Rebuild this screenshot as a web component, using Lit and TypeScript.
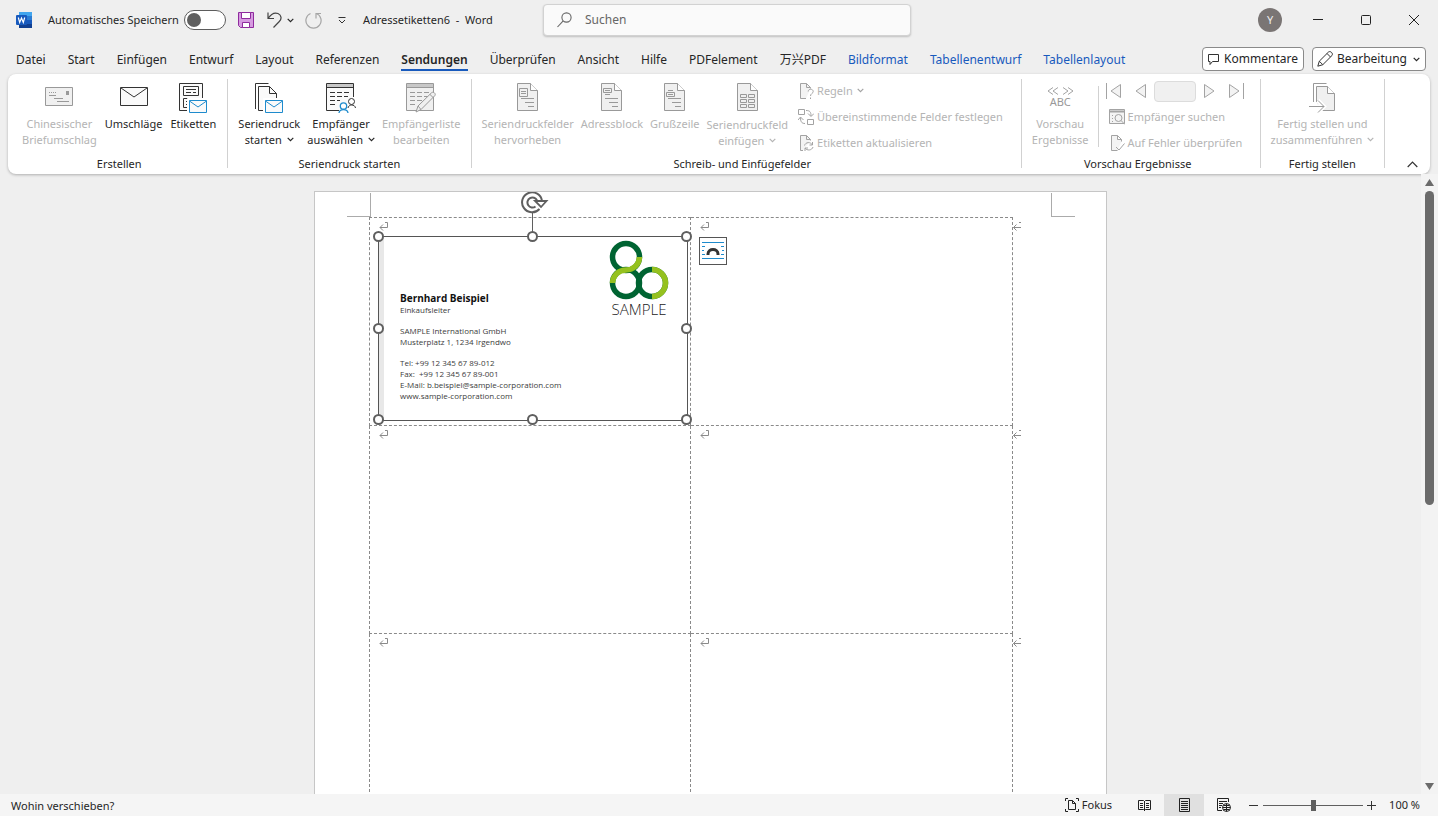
import { LitElement, html, svg, css, nothing } from "lit";
import { customElement } from "lit/decorators.js";

const chevron = html`<svg class="chev" width="7" height="5" viewBox="0 0 7 5"><path d="M.7.8 3.5 3.6 6.3.8" fill="none" stroke="currentColor" stroke-width="1.2"/></svg>`;

const icon = (w: number, h: number, body: unknown) =>
  html`<svg width=${w} height=${h} viewBox="0 0 ${w} ${h}" fill="none" stroke="currentColor" aria-hidden="true">${body}</svg>`;

const sheet = svg`<path d="M.5.5h13l7 7v20H.5z" fill="#f0f0f0"/><path d="M13.5.5v7h7" fill="#fff"/>`;
const miniMail = svg`<path d="M8.500 15.500h21v15h-21z" fill="#fff" stroke="#fff"/><path d="M10.500 17.500h17v12h-17z" fill="#fafafa" stroke="#1e8bcd"/><path d="m10.500 18 8.500 6 8.500-6" stroke="#1e8bcd"/>`;
const halfSheet = svg`<path d="M8.500 15.500h-6V.5h6l4 4v2M8.500.5v4h4" fill="#f3f3f3"/>`;

const icons: Record<string, unknown> = {
  china: icon(28, 30, svg`<path d="M.5 4.500h27v18H.5z" fill="#f0f0f0"/><path d="M4 9.500h8" stroke-dasharray="1 1"/><path d="M4 12.500h7M9 15.500h9M12 18.500h12"/><path d="M21 8h3v4h-3z" fill="#999" stroke="none"/>`),
  envelope: icon(28, 30, svg`<path d="M.5 4.500h27v18H.5z" fill="#fafafa"/><path d="m1 5 13 9L27 5"/>`),
  labels: icon(28, 30, svg`<path d="M9 27.500H.5V.5h23V16" fill="#fafafa"/><path d="M4.500 3.500h15v9h-15zM7 6.500h10M7 9.500h5M14 9.500h3M9 24.500H4.500v-9h15M7 18.500h3M7 21.500h2"/>${miniMail}`),
  merge: icon(28, 30, svg`<path d="M.5 26V.5h13"/><path d="M9 27.500H3.500v-24h11l7 7V16" fill="#fafafa"/><path d="M14.500 3.500v7h7"/>${miniMail}`),
  people: icon(30, 30, svg`<path d="M13 27.500H.5V.5h27V14" fill="#fafafa"/><path d="M1 1h26v3.500H1z" fill="#c8c8c8" stroke="none"/><path d="M1 4.500h26M4 9.500h5M11 9.500h5M18 9.500h5M4 13.500h5M11 13.500h5M18 13.500h4M4 17.500h5M11 17.500h3M4 21.500h5"/><circle cx="25.500" cy="18.500" r="3"/><path d="M22 25c.5-4 7-4 7.500 0"/><g stroke="#1e8bcd" stroke-width="1.300"><circle cx="17.500" cy="23" r="3.200" fill="#fff"/><path d="M13 30c.5-4.500 8.500-4.500 9 0"/></g>`),
  editlist: icon(30, 30, svg`<path d="M.5.5h27v27H.5z" fill="#f0f0f0"/><path d="M1 1h26v3.500H1z" fill="#c8c8c8" stroke="none"/><path d="M1 4.500h26M4 9.500h5M11 9.500h5M18 9.500h5M4 13.500h5M11 13.500h5M18 13.500h4M4 17.500h5M11 17.500h5M4 21.500h5"/><path d="m10 29 2-6L25.500 9.800c2-1.800 5 1.200 3.200 3L15 26.500zM12 23l3 3.500M24 11.500l3.300 3.200" fill="#f0f0f0"/>`),
  fields: icon(21, 30, svg`${sheet}<path d="M2.500 5.500h8v8h-8zM4 8.500h5M4 10.500h5M4 15.500h13M8 19.500h9M11 23.500h6"/>`),
  address: icon(21, 30, svg`${sheet}<path d="M2.500 5.500h8v4h-8zM4 7.500h5M4 11.500h5M4 15.500h13M8 19.500h9M11 23.500h6"/>`),
  greet: icon(21, 30, svg`${sheet}<path d="M2.500 9.500h8v4h-8zM4 7.500h5M4 11.500h5M4 15.500h13M8 19.500h9M11 23.500h6"/>`),
  insert: icon(21, 30, svg`${sheet}<path d="M3.500 11.500h6v3h-6zM11.500 11.500h6v3h-6zM3.500 16.500h6v3h-6zM11.500 16.500h6v3h-6zM3.500 21.500h6v3h-6zM11.500 21.500h6v3h-6z"/>`),
  finish: icon(28, 30, svg`<path d="M5.500 19V.5h13"/><path d="M11.500 27.500h15v-17l-7-7h-11V19" fill="#f0f0f0"/><path d="M19.500 3.500v7h7" fill="#fff"/><path d="M1 23.500h15M10 17.500l6 6-6 6" stroke="#fff" stroke-width="4"/><path d="M1 23.500h15M10 17.500l6 6-6 6"/>`),
  rules: icon(16, 16, svg`<path d="M8 15.500H2.500V.5h6l4 4v1" fill="#f3f3f3"/><path d="M8.500.5v4h4"/><path d="M10.200 8.500c0-3 5-3 5 0 0 2-2.700 2-2.700 4.500M12.500 14.500v1.500"/>`),
  match: icon(16, 16, svg`<path d="M.5.5h6v5h-6zM9.500 10.500h6v5h-6z"/><path d="M8 1.500c4 0 5 1.500 5 5.500M10 4.500l3 3 3-3M7 14.500c-3.500 0-4.500-2-4.500-6M0 11l2.500-3L5.500 11"/>`),
  update: icon(16, 16, svg`<path d="M5 15.500H2.500V.5h6l4 4v1" fill="#f3f3f3"/><path d="M8.500.5v4h4"/><path d="M6.500 10.500c1-3.500 6-4 8-.5M14.500 7v3h-3M15 12c-1 3.500-6 4-8 1M7 16v-3h3"/>`),
  find: icon(16, 16, svg`<path d="M.5.5h15v14H.5z" fill="#f3f3f3"/><path d="M1 2.500h14" stroke-width="2"/><path d="M3 6.500h1M3 9.500h1M3 12.500h1"/><circle cx="9.500" cy="9" r="3.500"/><path d="m12 11.500 4 4"/>`),
  check: icon(16, 16, svg`${halfSheet}<path d="M7 12l3 3 5.500-6.500"/>`),
};

const ret = html`<svg class="ret" width="10" height="9" viewBox="0 0 10 9" fill="none" stroke="#8a8a8a"><path d="M6 .5h2.500v5H1M4 2.500l-3 3 3 3"/></svg>`;
const rowEnd = html`<svg class="rowend" width="10" height="9" viewBox="0 0 10 9" fill="none" stroke="#8a8a8a"><path d="M1.500 5.500H9M4.500 2.500l-3 3 3 3M7 .5h2"/></svg>`;

interface Cmd { i: string; a: string; b?: string; off?: boolean; menu?: boolean; low?: boolean }

@customElement("ribbon-button")
export class RibbonButton extends LitElement {
  static properties = { cmd: { attribute: false } };
  declare cmd: Cmd;
  static styles = css`
    :host { display: block; }
    button { all: unset; box-sizing: border-box; display: flex; flex-direction: column; align-items: center; font: 11px/16px "Noto Sans", sans-serif; color: #262626; white-space: nowrap; text-align: center; }
    button:disabled { color: #b4b4b4; }
    button:disabled svg { color: #999; }
    svg { display: block; color: #333; margin-bottom: 3px; }
    .chev { display: inline-block; margin: 0 0 2px 5px; color: inherit; }
    button:disabled .chev { color: inherit; }
    .low { line-height: 17px; }
  `;
  render() {
    const c = this.cmd;
    return html`<button ?disabled=${c.off}>
      ${icons[c.i]}
      <span class=${c.low ? "low" : ""}>${c.a}</span>
      ${c.b ? html`<span>${c.b}${c.menu ? chevron : nothing}</span>` : nothing}
    </button>`;
  }
}

@customElement("app-root")
export class AppRoot extends LitElement {
  static styles = css`
    :host { display: flex; flex-direction: column; height: 100vh; overflow: hidden; background: #efefef; color: #262626; font: 11px/16px "Noto Sans", "Noto Sans CJK SC", sans-serif; }
    * { box-sizing: border-box; }
    button { font: inherit; color: inherit; background: none; border: 0; padding: 0; }
    svg { display: block; flex: none; }
    .chev { display: inline-block; }

    .titlebar { display: grid; grid-template-columns: 1fr 368px 1fr; align-items: center; height: 40px; flex: none; padding-left: 16px; }
    .quick { display: flex; align-items: center; white-space: nowrap; }
    .auto { display: flex; align-items: center; gap: 5px; margin: 0 12px 0 16px; }
    .switch { appearance: none; margin: 0; width: 42px; height: 20px; border: 1px solid #5c5c5c; border-radius: 10px; background: #fff; padding: 2px; display: flex; }
    .switch::before { content: ""; width: 14px; height: 14px; border-radius: 50%; background: #5f5f5f; }
    .undo { display: flex; align-items: center; gap: 5px; margin: 0 11px 0 13px; }
    .more { margin: 0 17px 0 16px; }
    .title { white-space: pre; }
    .search { display: flex; align-items: center; gap: 12px; height: 32px; padding: 0 13px; background: #fafafa; border: 1px solid #d2d2d2; border-radius: 4px; box-shadow: 0 1px 2px #0003; }
    .search input { flex: 1; min-width: 0; border: 0; outline: 0; padding: 0; background: none; font: 12px/16px "Noto Sans", sans-serif; }
    .search input::placeholder { color: #666; opacity: 1; }
    .window { display: flex; justify-content: flex-end; align-items: center; padding-right: 18px; gap: 36px; }
    .avatar { width: 24px; height: 24px; border-radius: 50%; background: #7a7574; color: #eee; text-align: center; line-height: 24px; margin-right: -6px; }

    .tabs { display: flex; align-items: center; height: 34px; flex: none; padding: 4px 12px 0 16px; font-size: 12px; white-space: nowrap; }
    nav { display: flex; gap: 22px; flex: 1; }
    nav a { color: inherit; text-decoration: none; line-height: 25px; height: 24px; }
    nav .on { font-weight: 600; border-bottom: 2px solid #185abd; }
    nav .ctx { color: #185abd; }
    .act { display: flex; align-items: center; gap: 4px; height: 24px; padding: 0 5px 0 4px; margin-left: 8px; background: #fff; border: 1px solid #8a8a8a; border-radius: 4px; }
    .act .chev { margin-left: 2px; }

    .ribbon { display: flex; flex: none; height: 100px; margin: 0 8px; background: #fff; border-radius: 8px; box-shadow: 0 1px 3px #0004; padding: 5px 0 6px; }
    .group { display: flex; flex-direction: column; padding: 0 10px; border-right: 1px solid #d1d1d1; }
    .group.first { padding: 0 11px 0 14px; }
    .group.first .cmds { gap: 8px; }
    .group.wide { padding-right: 18px; }
    .group.preview { padding-right: 16px; }
    .cmds { display: flex; gap: 7px; flex: 1; padding-top: 4px; }
    h2 { margin: 0; font: inherit; text-align: center; }
    .group h2 { line-height: 8px; }
    .col { display: flex; flex-direction: column; gap: 10px; color: #b4b4b4; }
    .col button { display: flex; align-items: center; gap: 3px; height: 16px; white-space: nowrap; color: #b4b4b4; }
    .col button svg { color: #a3a3a3; }
    .col .chev { margin: 0 0 2px 4px; }
    .fieldcol { margin-left: 3px; }
    .prev { border-left: 1px solid #d1d1d1; margin: 3px 0 13px 2px; padding-left: 10px; }
    .prev .col { margin: -3px 0 -5px; }
    .nav { display: flex; align-items: center; height: 20px; gap: 13px; margin: -2px 0 -2px -3px; }
    .nav input { width: 42px; height: 21px; border: 1px solid #dcdcdc; border-radius: 4px; background: #f0f0f0; margin: 0 -5px; padding: 0; }
    .abc { display: flex; flex-direction: column; align-items: center; color: #b4b4b4; white-space: nowrap; }
    .abc svg { margin: 4px 0 0; }
    .abc b { font-weight: 400; line-height: 12px; color: #999; margin: 1px 0 8px; }
    .fold { margin: auto 12px 0 auto; }

    .work { display: flex; flex: 1; min-height: 0; }
    main { flex: 1; display: flex; justify-content: center; overflow: hidden; padding-top: 17px; }
    .page { position: relative; flex: none; width: 793px; height: 1123px; background: #fff; border: 1px solid #c6c6c6; padding: 25px 0 0 54px; }
    .mark { position: absolute; top: 1px; width: 24px; height: 24px; border-bottom: 1px solid #ababab; }
    .mark.l { left: 32px; border-right: 1px solid #ababab; }
    .mark.r { right: 31px; border-left: 1px solid #ababab; }
    table { border-collapse: collapse; table-layout: fixed; width: 644px; }
    td { height: 208px; padding: 0; vertical-align: top; border: 1px dashed #8a8a8a; }
    td:first-child { width: 321px; }
    .cell { display: flow-root; position: relative; height: 207px; padding-left: 9px; }
    .ret { margin: 4px 0 0 0; }
    .rowend { position: absolute; right: -10px; top: 4px; }
    figure { position: relative; margin: 5px 0 0 -1px; width: 310px; height: 185px; border: 1px solid #555; box-shadow: inset 5px 0 0 #e8e8e8; padding: 56px 0 0 21px; color: #3c3c3c; font: 8px/11px "Open Sans", sans-serif; background: #fff; }
    figure strong { display: block; font: 700 10px/11px "Open Sans", sans-serif; color: #111; }
    figure p { margin: 0 0 10px; white-space: pre; }
    .logo { position: absolute; right: 17px; top: 3px; width: 62px; display: flex; flex-direction: column; align-items: center; font: 300 15px/18px "Open Sans", sans-serif; color: #222; }
    .h { position: absolute; width: 11px; height: 11px; margin: -6px; border: 2px solid #5f5f5f; border-radius: 50%; background: #fff; }
    .t { top: 0; } .m { top: 50%; } .b { top: 100%; }
    .s { left: 0; } .c { left: 50%; } .e { left: 100%; }
    .rot { position: absolute; left: 142px; bottom: 100%; }
    .layout { position: absolute; left: 8px; top: 19px; width: 28px; height: 28px; background: #fff; border: 1px solid #555; }

    .scroll { width: 17px; display: flex; flex-direction: column; align-items: center; gap: 4px; padding: 5px 0 4px; background: #f3f3f3; }
    .thumb { width: 9px; height: 314px; border-radius: 5px; background: #6b6b6b; margin-bottom: auto; }

    footer { display: flex; align-items: center; flex: none; height: 22px; background: #f5f5f5; padding: 0 18px 0 11px; }
    footer .msg { flex: 1; line-height: 18px; padding-top: 1px; }
    footer button { display: flex; align-items: center; justify-content: center; gap: 3px; height: 22px; }
    .view { width: 40px; }
    .read { margin-left: 12px; }
    .view.on { background: #e0e0e0; }
    .zoom { appearance: none; width: 100px; height: 12px; margin: 0 4px; background: linear-gradient(#5f5f5f, #5f5f5f) center / 100% 1px no-repeat; }
    .zoom::-webkit-slider-thumb { appearance: none; width: 5px; height: 11px; background: #5f5f5f; }
    .pct { margin-left: 13px; }
  `;

  tabs = ["Datei", "Start", "Einfügen", "Entwurf", "Layout", "Referenzen", "Sendungen", "Überprüfen", "Ansicht", "Hilfe", "PDFelement", "万兴PDF", "Bildformat", "Tabellenentwurf", "Tabellenlayout"];

  btn(cmd: Cmd) { return html`<ribbon-button .cmd=${cmd}></ribbon-button>`; }
  row(i: string, text: string, menu = false) {
    return html`<button disabled>${icons[i]}<span>${text}${menu ? chevron : nothing}</span></button>`;
  }
  tri(left: boolean, bar: boolean, label: string) {
    const d = left ? "M11.500 1.500v13L2 8z" : "M.5 1.500v13L10 8z";
    return html`<button disabled aria-label=${label}>${icon(bar ? 15 : 12, 16, svg`
      <g fill="#f3f3f3" transform=${bar && left ? "translate(3 0)" : "translate(0 0)"}><path d=${d}/></g>
      ${bar ? svg`<path d=${left ? "M.5 0v16" : "M14.500 0v16"}/>` : nothing}`)}</button>`;
  }

  renderTitle() {
    return html`<header class="titlebar">
      <div class="quick">
        <svg width="16" height="16" viewBox="0 0 16 16"><path d="M3 0h13v4H3z" fill="#41a5ee"/><path d="M3 4h13v4H3z" fill="#2b7cd3"/><path d="M3 8h13v4H3z" fill="#185abd"/><path d="M3 12h13v4H3z" fill="#103f91"/><rect y="3" width="11" height="10" rx="1" fill="#185abd"/><path d="m2.300 5.500 1.400 5L5.500 6l1.800 4.500 1.400-5" fill="none" stroke="#fff" stroke-width="1.200"/></svg>
        <label class="auto">Automatisches Speichern<input class="switch" type="checkbox" role="switch"></label>
        <button aria-label="Speichern"><svg width="16" height="16" viewBox="0 0 16 16" fill="#d69be0" stroke="#8f2b9e"><path d="M.5.5h15v15h-13l-2-2z"/><path d="M3.500.5h9v6h-9zM4.500 15.500v-5h7v5z" fill="#fff"/></svg></button>
        <button class="undo" aria-label="Rückgängig"><svg width="15" height="16" viewBox="0 0 15 16" fill="none" stroke="#444" stroke-width="1.200"><path d="M1 .5v6h6M1 6.500C4 2 8 .3 11 1.500c3.500 1.500 4 5.500 1.300 8L6.500 15.500"/></svg>${chevron}</button>
        <button disabled aria-label="Wiederholen"><svg width="17" height="17" viewBox="0 0 17 17" fill="none" stroke="#a6a6a6" stroke-width="1.200"><path d="M5.500 1.500A7.600 7.600 0 1 0 11.500 1.500M11 6.500v-5h5"/></svg></button>
        <button class="more" aria-label="Anpassen"><svg width="8" height="7" viewBox="0 0 8 7" fill="none" stroke="#333"><path d="M.5.5h7M1 3l3 3 3-3"/></svg></button>
        <span class="title">Adressetiketten6  -  Word</span>
      </div>
      <label class="search"><svg width="16" height="16" viewBox="0 0 16 16" fill="none" stroke="#666" stroke-width="1.100"><circle cx="9.500" cy="5.500" r="4.600"/><path d="M6.200 8.800.5 15"/></svg><input type="search" placeholder="Suchen" aria-label="Suchen"></label>
      <div class="window">
        <span class="avatar">Y</span>
        <button aria-label="Minimieren"><svg width="12" height="12" viewBox="0 0 12 12"><path d="M1 5.500h10" stroke="#222"/></svg></button>
        <button aria-label="Maximieren"><svg width="12" height="12" viewBox="0 0 12 12"><rect x="1.500" y="1.500" width="9" height="9" rx="1" fill="none" stroke="#222"/></svg></button>
        <button aria-label="Schließen"><svg width="12" height="12" viewBox="0 0 12 12"><path d="m1 1 10 10M11 1 1 11" stroke="#222"/></svg></button>
      </div>
    </header>`;
  }

  renderRibbon() {
    return html`<section class="ribbon">
      <div class="group first"><div class="cmds">
        ${this.btn({ i: "china", a: "Chinesischer", b: "Briefumschlag", off: true })}
        ${this.btn({ i: "envelope", a: "Umschläge" })}
        ${this.btn({ i: "labels", a: "Etiketten" })}
      </div><h2>Erstellen</h2></div>
      <div class="group"><div class="cmds">
        ${this.btn({ i: "merge", a: "Seriendruck", b: "starten", menu: true })}
        ${this.btn({ i: "people", a: "Empfänger", b: "auswählen", menu: true })}
        ${this.btn({ i: "editlist", a: "Empfängerliste", b: "bearbeiten", off: true })}
      </div><h2>Seriendruck starten</h2></div>
      <div class="group wide"><div class="cmds">
        ${this.btn({ i: "fields", a: "Seriendruckfelder", b: "hervorheben", off: true })}
        ${this.btn({ i: "address", a: "Adressblock", off: true })}
        ${this.btn({ i: "greet", a: "Grußzeile", off: true })}
        ${this.btn({ i: "insert", a: "Seriendruckfeld", b: "einfügen", off: true, menu: true, low: true })}
        <div class="col fieldcol">
          ${this.row("rules", "Regeln", true)}
          ${this.row("match", "Übereinstimmende Felder festlegen")}
          ${this.row("update", "Etiketten aktualisieren")}
        </div>
      </div><h2>Schreib- und Einfügefelder</h2></div>
      <div class="group preview"><div class="cmds">
        <button class="abc" disabled>
          <svg width="27" height="8" viewBox="0 0 27 8" fill="none" stroke="#a3a3a3"><path d="M6 .5 1 4l5 3.500M11 .5 6 4l5 3.500M16 .5 21 4l-5 3.500M21 .5 26 4l-5 3.500"/></svg>
          <b>ABC</b><span>Vorschau</span><span>Ergebnisse</span>
        </button>
        <div class="prev"><div class="col">
          <div class="nav">
            ${this.tri(true, true, "Erster Datensatz")}${this.tri(true, false, "Vorheriger Datensatz")}
            <input aria-label="Datensatz" disabled>
            ${this.tri(false, false, "Nächster Datensatz")}${this.tri(false, true, "Letzter Datensatz")}
          </div>
          ${this.row("find", "Empfänger suchen")}
          ${this.row("check", "Auf Fehler überprüfen")}
        </div></div>
      </div><h2>Vorschau Ergebnisse</h2></div>
      <div class="group"><div class="cmds">
        ${this.btn({ i: "finish", a: "Fertig stellen und", b: "zusammenführen", off: true, menu: true })}
      </div><h2>Fertig stellen</h2></div>
      <button class="fold" aria-label="Menüband reduzieren"><svg width="11" height="7" viewBox="0 0 11 7"><path d="M.7 6 5.500 1.200 10.300 6" fill="none" stroke="#333" stroke-width="1.200"/></svg></button>
    </section>`;
  }

  renderPicture() {
    return html`<figure>
      <strong>Bernhard Beispiel</strong>
      <p>Einkaufsleiter</p>
      <p>SAMPLE International GmbH
Musterplatz 1, 1234 Irgendwo</p>
      <p>Tel: +99 12 345 67 89-012
Fax:  +99 12 345 67 89-001
E-Mail: b.beispiel@sample-corporation.com
www.sample-corporation.com</p>
      <div class="logo">
        <svg width="60" height="60" viewBox="0 0 60 60" fill="none" stroke-width="5.500">
          <circle cx="17" cy="17" r="13.500" stroke="#006432"/><circle cx="17" cy="43" r="13.500" stroke="#006432"/><circle cx="43" cy="43" r="13.500" stroke="#006432"/>
          <path d="M30.500 17c0 7-6 13-13.500 13S3.500 36 3.500 43M43 29.500a13.500 13.500 0 0 1 0 27" stroke="#95c11f"/>
        </svg>
        <span>SAMPLE</span>
      </div>
      <svg class="rot" width="30" height="45" viewBox="0 0 30 45" fill="none" stroke="#5f5f5f"><path d="M11.500 20v25"/><path d="M18.500 17a10 10 0 1 1 2.500-8M14.500 14.500a5 5 0 1 1 1.500-6" stroke-width="2"/><path d="M14 9h11.500l-5.500 6z" fill="#fff" stroke-width="1.800"/></svg>
      ${["t s", "t c", "t e", "m s", "m e", "b s", "b c", "b e"].map((p) => html`<i class="h ${p}"></i>`)}
    </figure>`;
  }

  render() {
    return html`
      ${this.renderTitle()}
      <div class="tabs">
        <nav>${this.tabs.map((t, n) => html`<a href="#" class="${n === 6 ? "on" : n > 11 ? "ctx" : ""}">${t}</a>`)}</nav>
        <button class="act"><svg width="13" height="13" viewBox="0 0 13 13" fill="none" stroke="#333"><path d="M1.500 1.500h10v7h-6l-2.500 3v-3H1.500z"/></svg>Kommentare</button>
        <button class="act"><svg width="16" height="16" viewBox="0 0 16 16" fill="none" stroke="#333"><path d="m.8 15.200 1.500-5L11.500 1c2-1.500 5 1.500 3.500 3.500l-9.200 9.200zM2.300 10.200l3.500 3.500M10 2.500 13.500 6"/></svg>Bearbeitung${chevron}</button>
      </div>
      ${this.renderRibbon()}
      <div class="work">
        <main><div class="page">
          <span class="mark l"></span><span class="mark r"></span>
          <table>${[0, 1, 2, 3, 4].map((r) => html`<tr>
            <td><div class="cell">${ret}${r === 0 ? this.renderPicture() : nothing}</div></td>
            <td><div class="cell">${ret}${rowEnd}${r === 0 ? html`<button class="layout" aria-label="Layoutoptionen"><svg width="26" height="26" viewBox="0 0 26 26" fill="none" stroke="#1e8bcd"><path d="M2 4.500h22M2 8.500h3M21 8.500h3M2 12.500h2M22 12.500h2M2 16.500h3M21 16.500h3M2 20.500h22"/><path d="M8 17v-1c0-6 10-6 10 0v1" stroke="#333" stroke-width="3"/></svg></button>` : nothing}</div></td>
          </tr>`)}</table>
        </div></main>
        <div class="scroll">
          <svg width="9" height="8" viewBox="0 0 9 8"><path d="M4.500 0 9 7H0z" fill="#6b6b6b"/></svg>
          <div class="thumb"></div>
          <svg width="9" height="8" viewBox="0 0 9 8"><path d="M4.500 8 9 1H0z" fill="#6b6b6b"/></svg>
        </div>
      </div>
      <footer>
        <span class="msg">Wohin verschieben?</span>
        <button><svg width="14" height="14" viewBox="0 0 14 14" fill="none" stroke="#222"><path d="M3 .5H.5V3M11 .5h2.500V3M.5 11v2.500H3M13.500 11v2.500H11M3.500 2.500h4l3 3v6h-7zM7.500 2.500v3h3"/></svg>Fokus</button>
        <button class="view read" aria-label="Lesemodus"><svg width="13" height="13" viewBox="0 0 13 13" fill="none" stroke="#222"><path d="M.5 1.500h5l1 1 1-1h5v9h-5l-1 1-1-1h-5zM6.500 2v10M2 4.500h3M2 6.500h3M2 8.500h3M8 4.500h3M8 6.500h3M8 8.500h3"/></svg></button>
        <button class="view on" aria-label="Seitenlayout"><svg width="11" height="14" viewBox="0 0 11 14" fill="none" stroke="#222"><path d="M.5.5h10v13H.5zM2 3.500h7M2 5.500h7M2 7.500h7M2 9.500h7M2 11.500h7"/></svg></button>
        <button class="view" aria-label="Weblayout"><svg width="14" height="14" viewBox="0 0 14 14" fill="none" stroke="#222"><path d="M5 12.500H.5V.5h11V4M2 3.500h8M2 5.500h4M2 7.500h3M2 9.500h2"/><circle cx="9.500" cy="9.500" r="4" fill="#f5f5f5"/><path d="M9.500 5.500v8M5.500 9.500h8M6.500 7.500h6M6.500 11.500h6"/></svg></button>
        <button class="minus" aria-label="Verkleinern"><svg width="15" height="9" viewBox="0 0 15 9"><path d="M5 4.500h9" stroke="#333"/></svg></button>
        <input class="zoom" type="range" min="0" max="200" value="100" aria-label="Zoom">
        <button aria-label="Vergrößern"><svg width="9" height="9" viewBox="0 0 9 9"><path d="M0 4.500h9M4.500 0v9" stroke="#333"/></svg></button>
        <span class="pct">100 %</span>
      </footer>`;
  }
}
